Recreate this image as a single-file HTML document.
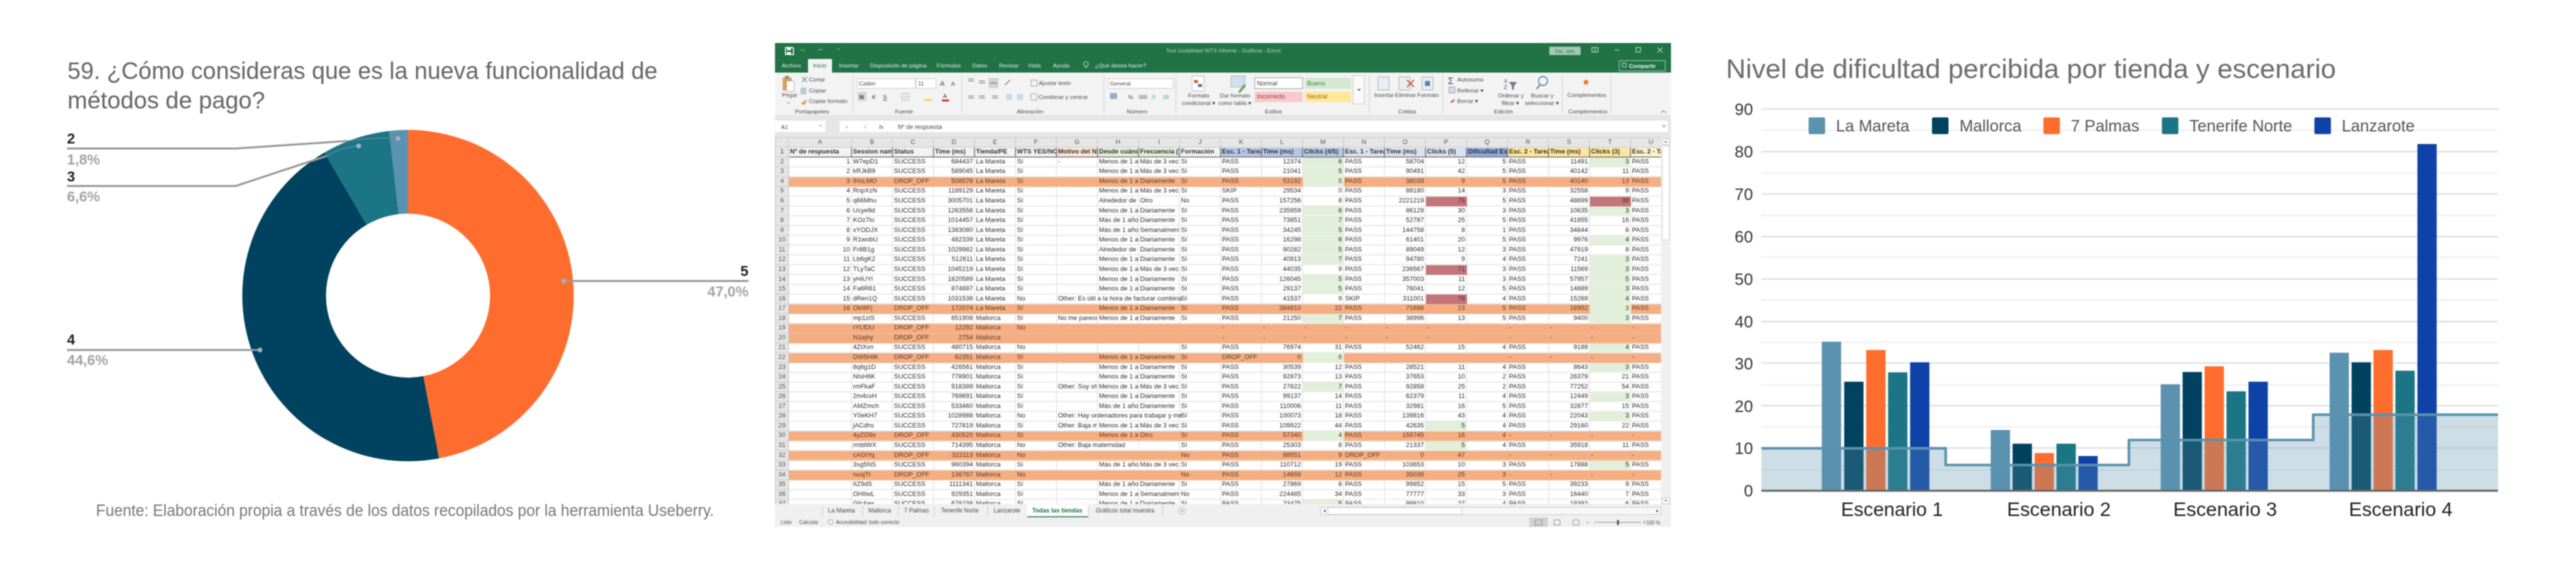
<!DOCTYPE html>
<html lang="es"><head><meta charset="utf-8"><title>Reference</title>
<style>
html,body{margin:0;padding:0;background:#fff;width:2560px;height:575px;overflow:hidden}
body{position:relative;font-family:"Liberation Sans",sans-serif}
svg{position:absolute;left:0;top:0}
svg text{font-family:"Liberation Sans",sans-serif}
.soft{filter:blur(.45px)}
.xl text{font-size:5.8px;fill:#4a4a4a}
#grid{position:absolute;left:775px;top:137.3px;width:885.7px;height:366.9px;overflow:hidden;filter:blur(.42px);background:#fff}
#grid table{border-collapse:collapse;table-layout:fixed;width:896px;transform-origin:0 0;transform:scaleY(.978);font-size:6.5px;color:#2e2e2e;background:#fff}
#grid td{height:10px;line-height:9px;padding:0 1px;white-space:nowrap;overflow:hidden;border:1px solid #e6e6e6;box-sizing:border-box}
#grid td:nth-child(1){background:#e6e6e6;text-align:center;color:#555;border-color:#d0d0d0;padding:0}
#grid td:nth-child(2),#grid td:nth-child(5),#grid td:nth-child(13),#grid td:nth-child(14),#grid td:nth-child(16),#grid td:nth-child(17),#grid td:nth-child(18),#grid td:nth-child(20),#grid td:nth-child(21){text-align:right}
#grid tr.c td{background:#e6e6e6;text-align:center;color:#555;border-color:#d0d0d0;height:8.7px}
#grid tr.h td{font-weight:bold;text-align:left;background:#f2f2f2;border-right:1px solid #777;border-bottom:1px solid #777;color:#333}
#grid tr.h td:nth-child(1){background:#e6e6e6;font-weight:normal;text-align:center;border-color:#d0d0d0}
#grid tr.h .go{background:#fce4d6}#grid tr.h .gg{background:#e2efda}
#grid tr.h .b1{background:#b4c6e7}#grid tr.h .b0{background:#8ea9db}#grid tr.h .b2{background:#d9e1f2}
#grid tr.h .y1{background:#ffe699}#grid tr.h .y2{background:#fff2cc}
#grid tr.o td{background:#f4ae82;border-color:#f4ae82;color:#5a3a26}
#grid tr.o td:nth-child(1){background:#e6e6e6;color:#555;border-color:#d0d0d0}
#grid td.g,#grid tr.o td.g{background:#e2efda;border-color:#e2efda}
#grid td.x{background:#c4757a;border-color:#c4757a;color:#5b2a2a}
#grid td.l{text-align:left!important}
#grid td.v{overflow:visible;border-right-color:transparent}
</style></head><body>
<svg width="2560" height="575" viewBox="0 0 2560 575" xmlns="http://www.w3.org/2000/svg">
<!-- DONUT -->
<g class="soft">
<text x="67.5" y="79" font-size="24.5" fill="#666" textLength="590" lengthAdjust="spacingAndGlyphs">59. ¿Cómo consideras que es la nueva funcionalidad de</text>
<text x="67.5" y="108.5" font-size="24.5" fill="#666" textLength="197.5" lengthAdjust="spacingAndGlyphs">métodos de pago?</text>
<path d="M408 129.9A165.7 165.7 0 0 1 439.05 458.37L423.37 376.15A82 82 0 0 0 408 213.6Z" fill="#ff6d2e"/>
<path d="M439.05 458.37A165.7 165.7 0 0 1 324.55 152.45L366.7 224.76A82 82 0 0 0 423.37 376.15Z" fill="#00425f"/>
<path d="M324.55 152.45A165.7 165.7 0 0 1 389.24 130.96L398.72 214.12A82 82 0 0 0 366.7 224.76Z" fill="#1b7585"/>
<path d="M389.24 130.96A165.7 165.7 0 0 1 408 129.9L408 213.6A82 82 0 0 0 398.72 214.12Z" fill="#5a92b0"/>
<g fill="none" stroke="#9a9a9a" stroke-width="2">
<path d="M67 148.5H235.7L347 141"/><path d="M67 186H235.7L326.5 156"/><path d="M67 350H260"/><path d="M563.8 281H748.5"/>
<path d="M347 141Q375 137 398 138.6M326.5 156Q345 146 358.7 146" stroke="#5a8a9c" stroke-width="1"/>
</g>
<g fill="#9fb4bd"><circle cx="398" cy="138.6" r="2.4"/><circle cx="358.7" cy="146" r="2.4"/><circle cx="260" cy="350" r="2.4"/><circle cx="563.8" cy="281" r="2.4"/></g>
<g font-size="14.5" font-weight="bold" fill="#222">
<text x="67" y="143.7">2</text><text x="67" y="181.5">3</text><text x="67" y="344.7">4</text><text x="748.5" y="275.8" text-anchor="end">5</text></g>
<g font-size="14.5" font-weight="bold" fill="#a3a3a3">
<text x="67" y="164.5">1,8%</text><text x="67" y="201.7">6,6%</text><text x="67" y="365">44,6%</text><text x="748.5" y="296.3" text-anchor="end">47,0%</text></g>
<text x="96" y="516" font-size="16.5" fill="#777" textLength="618" lengthAdjust="spacingAndGlyphs">Fuente: Elaboración propia a través de los datos recopilados por la herramienta Useberry.</text>
</g>

<!-- EXCEL CHROME -->
<g class="xl soft">
<rect x="775" y="43" width="896" height="484" fill="#f0f0f0"/>
<rect x="775" y="43" width="896" height="29.7" fill="#217346"/>
<rect x="775" y="72.7" width="896" height="42.3" fill="#f3f3f3"/>
<rect x="775" y="115" width="896" height="22.3" fill="#e6e6e6"/>
<rect x="775.3" y="120.7" width="50" height="11.3" fill="#fff"/>
<rect x="839.7" y="120.7" width="828" height="11.3" fill="#fff"/>
<rect x="808" y="59" width="24" height="14" fill="#f3f3f3"/>
<!-- title bar -->
<path d="M785.5 47.5h7l1 1v6h-8z" fill="none" stroke="#fff" stroke-width="1"/><rect x="787" y="47.8" width="4" height="2.4" fill="#fff"/><rect x="787" y="52" width="4" height="2.6" fill="#fff"/>
<g fill="none" stroke="#7fb096" stroke-width=".8"><path d="M800 50.5q3-2 5 1"/><path d="M818 51q2-3 5-1"/><path d="M837 49h3"/></g>
<text x="1166" y="52.7" style="fill:#b7d3c2" textLength="114.7" lengthAdjust="spacingAndGlyphs">Test Usabilidad WTS Informe - Gráficos - Excel</text>
<rect x="1549.3" y="46.7" width="31.4" height="8.3" fill="#a5c9b4"/>
<text x="1555" y="53" style="fill:#217346;font-size:5.3px">Inic. ses.</text>
<g fill="none" stroke="#b7d3c2" stroke-width=".8"><rect x="1592" y="47.5" width="6" height="4.5"/><path d="M1595 47.5v4.5"/><path d="M1614.5 50h4.5"/><rect x="1636" y="47.5" width="4.5" height="4.5"/><path d="M1657.5 47.5l5 5m0-5l-5 5"/></g>
<rect x="1619.3" y="60.7" width="46" height="10.3" fill="none" stroke="#a9cbb7" stroke-width=".7"/>
<text x="1629" y="68.2" style="fill:#e8f2ec;font-weight:bold;font-size:5.6px">Compartir</text>
<path d="M1622.5 63h3.5v4h-3.5z" fill="none" stroke="#e8f2ec" stroke-width=".6"/>
<!-- tabs -->
<g>
<text x="781.7" y="67.3" style="fill:#dfece4">Archivo</text>
<text x="839" y="67.3" style="fill:#dfece4">Insertar</text>
<text x="870" y="67.3" style="fill:#dfece4">Disposición de página</text>
<text x="936.7" y="67.3" style="fill:#dfece4">Fórmulas</text>
<text x="972" y="67.3" style="fill:#dfece4">Datos</text>
<text x="999" y="67.3" style="fill:#dfece4">Revisar</text>
<text x="1028" y="67.3" style="fill:#dfece4">Vista</text>
<text x="1053" y="67.3" style="fill:#dfece4">Ayuda</text>
<text x="1095" y="67.3" style="fill:#dfece4">¿Qué desea hacer?</text>
</g>
<text x="813" y="67.3" style="fill:#217346">Inicio</text>
<circle cx="1086" cy="64" r="2.3" fill="none" stroke="#dfece4" stroke-width=".7"/><path d="M1085 67.5h2" stroke="#dfece4" stroke-width=".7"/>
<!-- portapapeles -->
<rect x="782.7" y="77.5" width="9" height="13" fill="#d9a15a"/><rect x="786.5" y="81" width="7.5" height="10.5" fill="#fff" stroke="#999" stroke-width=".5"/><rect x="785" y="76" width="4" height="2.5" fill="#888"/>
<text x="782" y="97">Pegar</text><path d="M787 102l1.5 1.5 1.5-1.5" stroke="#666" stroke-width=".5" fill="none"/>
<path d="M802 77l5 5m0-5l-5 5" stroke="#777" stroke-width=".8"/><rect x="801" y="88" width="5" height="6" fill="#b9cbdc" stroke="#8aa" stroke-width=".4"/>
<path d="M801 104l4-4 2 1-3 4z" fill="#d9a15a"/>
<text x="809" y="81.7">Cortar</text><text x="809" y="92.3">Copiar</text><text x="809" y="103">Copiar formato</text>
<text x="795" y="113.3">Portapapeles</text>
<!-- fuente -->
<rect x="857.3" y="78.7" width="58" height="9.6" fill="#fff" stroke="#c6c6c6" stroke-width=".6"/>
<rect x="916" y="78.7" width="20" height="9.6" fill="#fff" stroke="#c6c6c6" stroke-width=".6"/>
<text x="859" y="85.5">Calibri</text><text x="918" y="85.5">11</text>
<text x="940" y="86" style="font-size:7px">A</text><text x="951" y="86" style="font-size:6px">A</text>
<rect x="857.5" y="92" width="9" height="9" fill="#d2d2d2"/>
<text x="859.5" y="99" style="font-weight:bold;fill:#333">N</text><text x="872" y="99" style="font-style:italic;fill:#333">K</text><text x="883" y="99" style="text-decoration:underline;fill:#333">S</text>
<rect x="902" y="93.5" width="7" height="7" fill="none" stroke="#aaa" stroke-width=".5"/><path d="M905.5 93.5v7M902 97h7" stroke="#aaa" stroke-width=".4"/>
<rect x="924" y="99" width="8" height="2" fill="#ffd34d"/><rect x="942" y="99.5" width="7" height="2" fill="#d03030"/><text x="943" y="98" style="fill:#333">A</text>
<text x="895" y="113.3">Fuente</text>
<!-- alineación -->
<g stroke="#9a9a9a" stroke-width="1"><path d="M968 79h6M968 81h6M979 81h6M979 83h6M968 96h6M968 98h6M979 96h6M979 98h6M992 96h6M992 98h6"/></g>
<rect x="988.5" y="78" width="10" height="10" fill="#d2d2d2"/><path d="M990 83h7" stroke="#888"/>
<path d="M1005 85l5-5" stroke="#888" stroke-width="1"/>
<rect x="1006" y="94" width="6" height="6" fill="#cdd9ea"/><rect x="1017" y="94" width="6" height="6" fill="#cdd9ea"/>
<rect x="1031" y="80" width="6" height="6" fill="none" stroke="#888" stroke-width=".5"/><rect x="1031" y="94" width="6" height="6" fill="none" stroke="#888" stroke-width=".5"/>
<text x="1038.7" y="85">Ajustar texto</text><text x="1038.7" y="99">Combinar y centrar</text>
<text x="1016.7" y="113.3">Alineación</text>
<!-- número -->
<rect x="1108.3" y="78.7" width="65" height="9.6" fill="#fff" stroke="#c6c6c6" stroke-width=".6"/>
<text x="1110" y="85.5">General</text>
<rect x="1110" y="93" width="7" height="6" fill="#8fb0d0"/><text x="1128" y="99" style="fill:#444">%</text><text x="1139" y="99" style="font-size:5px">000</text>
<text x="1151" y="99" style="font-size:5px;fill:#3a7">,0</text><text x="1162" y="99" style="font-size:5px;fill:#3a7">,00</text>
<text x="1126.7" y="113.3">Número</text>
<!-- estilos -->
<rect x="1192" y="76" width="12" height="15" fill="#fff" stroke="#aaa" stroke-width=".5"/><rect x="1194" y="80" width="4" height="3" fill="#d0603a"/><rect x="1198" y="84" width="4" height="3" fill="#4a78b0"/>
<rect x="1231" y="76" width="14" height="11" fill="#cfe0ee" stroke="#aaa" stroke-width=".5"/><path d="M1238 92l6-8 2 2-6 7z" fill="#7aa05a"/>
<text x="1188" y="97.3">Formato</text><text x="1181.7" y="105">condicional ▾</text>
<text x="1219.7" y="97.3">Dar formato</text><text x="1218.3" y="105">como tabla ▾</text>
<rect x="1254.7" y="77.7" width="48" height="11" fill="#fff" stroke="#aaa" stroke-width=".8"/>
<rect x="1305" y="77.7" width="46" height="11" fill="#d5e8d4"/>
<rect x="1254.7" y="91.7" width="48" height="10.5" fill="#f6c9cd"/>
<rect x="1305" y="91.7" width="46" height="10.5" fill="#ffe898"/>
<text x="1257" y="85.5" style="font-size:6.3px;fill:#444">Normal</text>
<text x="1307" y="85.5" style="font-size:6.3px;fill:#3d8a3d">Bueno</text>
<text x="1257" y="98.7" style="font-size:6.3px;fill:#a8302a">Incorrecto</text>
<text x="1307" y="98.7" style="font-size:6.3px;fill:#a36b10">Neutral</text>
<rect x="1353" y="75.7" width="11.3" height="28.3" fill="#fafafa" stroke="#c6c6c6" stroke-width=".6"/><path d="M1357 89h4l-2 2z" fill="#666"/>
<text x="1265" y="113.3">Estilos</text>
<!-- celdas -->
<g fill="#e8eef5" stroke="#999" stroke-width=".5"><rect x="1378" y="77" width="11" height="13"/><rect x="1399" y="77" width="11" height="13"/><rect x="1422" y="77" width="11" height="13"/></g>
<path d="M1407 80l7 7m0-7l-7 7" stroke="#c0392b" stroke-width="1"/><rect x="1425" y="81" width="5" height="5" fill="#5a7fb0"/>
<text x="1374.3" y="97">Insertar</text><text x="1395" y="97">Eliminar</text><text x="1417.3" y="97">Formato</text><text x="1398.3" y="113.3">Celdas</text>
<!-- edición -->
<text x="1448" y="84" style="font-size:9px;fill:#444">Σ</text>
<rect x="1449" y="87" width="6" height="6" fill="#cfe0ee" stroke="#777" stroke-width=".4"/>
<path d="M1450 102l4-3 1 1-3 3z" fill="#d06a5a"/>
<text x="1457.3" y="81.7">Autosuma</text><text x="1457.3" y="92.3">Rellenar ▾</text><text x="1457.3" y="103">Borrar ▾</text>
<text x="1504" y="83" style="font-size:5px;fill:#4a78b0">A</text><text x="1504" y="89" style="font-size:5px;fill:#333">Z</text><path d="M1509 82h8l-3 4v4l-2-1v-3z" fill="#777"/>
<circle cx="1543" cy="81" r="4.5" fill="none" stroke="#3a6ea5" stroke-width=".9"/><path d="M1540 85l-3.5 4" stroke="#3a6ea5" stroke-width="1.2"/>
<text x="1498" y="97.3">Ordenar y</text><text x="1501.7" y="105">filtrar ▾</text><text x="1531" y="97.3">Buscar y</text><text x="1525" y="105">seleccionar ▾</text>
<text x="1494" y="113.3">Edición</text>
<circle cx="1586" cy="82.3" r="2.4" fill="#f47b30"/>
<text x="1567.3" y="97">Complementos</text><text x="1568.3" y="113.3">Complementos</text>
<path d="M1661 113l2.5-2.5 2.5 2.5" fill="none" stroke="#777" stroke-width=".6"/>
<g stroke="#cfcfcf" stroke-width=".7"><path d="M853 75v38M961.7 75v38M1104 75v38M1176 75v38M1369.3 75v38M1442.7 75v38M1562.3 75v38M1610.7 75v38"/></g>
<!-- formula bar -->
<text x="781" y="129">A1</text><path d="M819 125l1.5 1.5 1.5-1.5" stroke="#666" stroke-width=".5" fill="none"/>
<text x="845" y="129" style="fill:#aaa">×</text><text x="863" y="129" style="fill:#aaa">✓</text><text x="879" y="129" style="font-style:italic">fx</text>
<text x="897.7" y="129" style="font-size:6.2px">Nº de respuesta</text>
<path d="M1662 125l2 2 2-2" stroke="#777" stroke-width=".6" fill="none"/>
<!-- scrollbar -->
<rect x="1661" y="137.3" width="10" height="367" fill="#f0f0f0"/>
<rect x="1662.3" y="138.7" width="7" height="6" fill="#fff" stroke="#aaa" stroke-width=".5"/>
<rect x="1662.3" y="146" width="7" height="94" fill="#fff" stroke="#c6c6c6" stroke-width=".5"/>
<rect x="1662.3" y="498" width="7" height="6" fill="#fff" stroke="#aaa" stroke-width=".5"/>
<path d="M1664.5 142.5l1.3-1.5 1.3 1.5zM1664.5 500l1.3 1.5 1.3-1.5z" fill="#333"/>
<!-- sheet tabs -->
<rect x="775" y="504.3" width="896" height="13" fill="#f0f0f0"/>
<rect x="1027" y="504.3" width="61.3" height="13" fill="#fff"/><path d="M1027 516.8h61.3" stroke="#217346" stroke-width="1"/>
<g stroke="#c6c6c6" stroke-width=".6"><path d="M822.3 506v10M862.7 506v10M898.3 506v10M934.3 506v10M987.7 506v10M1088.3 506v10M1162.7 506v10"/></g>
<g>
<text x="828" y="512.5" style="font-size:6px">La Mareta</text><text x="868.3" y="512.5" style="font-size:6px">Mallorca</text><text x="904" y="512.5" style="font-size:6px">7 Palmas</text><text x="941" y="512.5" style="font-size:6px">Tenerife Norte</text><text x="993.7" y="512.5" style="font-size:6px">Lanzarote</text>
<text x="1032.3" y="512.5" style="font-size:6px;font-weight:bold;fill:#217346">Todas las tiendas</text>
<text x="1095.7" y="512.5" style="font-size:6px">Gráficos total muestra</text></g>
<circle cx="1182" cy="511" r="3.5" fill="none" stroke="#aaa" stroke-width=".5"/><path d="M1180 511h4M1182 509v4" stroke="#999" stroke-width=".5"/>
<rect x="1320.7" y="507.3" width="340" height="7.4" fill="#f7f7f7" stroke="#bbb" stroke-width=".5"/>
<rect x="1328" y="507.5" width="133.7" height="7" fill="#fff" stroke="#bbb" stroke-width=".5"/>
<path d="M1325.5 509.5v3l-1.7-1.5zM1656.5 509.5v3l1.7-1.5z" fill="#333"/>
<!-- status -->
<text x="780.7" y="524" style="font-size:5.2px">Listo</text><text x="799.3" y="524" style="font-size:5.2px">Calcular</text>
<circle cx="830.7" cy="522" r="2.5" fill="none" stroke="#888" stroke-width=".5"/>
<text x="836" y="524" style="font-size:5.2px">Accesibilidad: todo correcto</text>
<rect x="1529.3" y="517.5" width="18.4" height="9.5" fill="#d2d2d2"/>
<g fill="none" stroke="#888" stroke-width=".6"><rect x="1535" y="520" width="7" height="5"/><rect x="1554" y="520" width="6" height="5"/><rect x="1573" y="520" width="6" height="5"/></g>
<path d="M1586 522.3h3M1594.3 522.3h46.4M1643 522.3h3M1644.5 520.8v3" stroke="#888" stroke-width=".6"/><rect x="1617" y="520" width="2" height="5" fill="#555"/>
<text x="1653.3" y="524.5" style="font-size:5px" text-anchor="middle">100 %</text>
</g>

<!-- RIGHT CHART -->
<g class="soft">
<text x="1726" y="78" font-size="26.5" fill="#6b6b6b" textLength="610" lengthAdjust="spacingAndGlyphs">Nivel de dificultad percibida por tienda y escenario</text>
<g stroke="#e0e0e0" stroke-width="1.6">
<path d="M1761.4 109H2498M1761.4 151.7H2498M1761.4 194H2498M1761.4 236.7H2498M1761.4 279H2498M1761.4 321.7H2498M1761.4 363H2498M1761.4 405.7H2498M1761.4 448H2498"/>
</g>
<g stroke="#f1eff0" stroke-width="1.5">
<path d="M1761.4 130.3H2498M1761.4 173H2498M1761.4 215.5H2498M1761.4 257H2498M1761.4 300H2498M1761.4 342.5H2498M1761.4 385H2498M1761.4 427H2498M1761.4 470H2498"/>
</g>
<g font-size="16.5" fill="#333" text-anchor="end">
<text x="1753" y="115">90</text><text x="1753" y="157.5">80</text><text x="1753" y="200">70</text><text x="1753" y="242.5">60</text><text x="1753" y="285">50</text><text x="1753" y="327.5">40</text><text x="1753" y="369.5">30</text><text x="1753" y="412">20</text><text x="1753" y="454">10</text><text x="1753" y="496.5">0</text>
</g>
<g>
<rect x="1808.6" y="117.4" width="16.5" height="16.7" rx="1.5" fill="#5a92b0"/>
<rect x="1932" y="117.4" width="16.5" height="16.7" rx="1.5" fill="#00425f"/>
<rect x="2043.4" y="117.4" width="16.5" height="16.7" rx="1.5" fill="#ff6d2e"/>
<rect x="2161.9" y="117.4" width="16.5" height="16.7" rx="1.5" fill="#1b7585"/>
<rect x="2314.4" y="117.4" width="16.5" height="16.7" rx="1.5" fill="#0f42a6"/>
</g>
<g font-size="17" fill="#555">
<text x="1836" y="131.5" textLength="73.5" lengthAdjust="spacingAndGlyphs">La Mareta</text>
<text x="1959.5" y="131.5" textLength="62" lengthAdjust="spacingAndGlyphs">Mallorca</text>
<text x="2070.8" y="131.5" textLength="68.6" lengthAdjust="spacingAndGlyphs">7 Palmas</text>
<text x="2189.3" y="131.5" textLength="103" lengthAdjust="spacingAndGlyphs">Tenerife Norte</text>
<text x="2341.8" y="131.5" textLength="73" lengthAdjust="spacingAndGlyphs">Lanzarote</text>
</g>
<g fill="#5a92b0">
<rect x="1821.8" y="341.7" width="19.3" height="149"/><rect x="1990.7" y="430" width="19.3" height="60.7"/><rect x="2160.7" y="384.3" width="19.3" height="106.4"/><rect x="2329.6" y="352.7" width="19.3" height="138"/>
</g>
<g fill="#00425f">
<rect x="1844.2" y="381.7" width="19.3" height="109"/><rect x="2012.6" y="443.7" width="19.3" height="47"/><rect x="2182.6" y="372" width="19.3" height="118.7"/><rect x="2351.6" y="362.3" width="19.3" height="128.4"/>
</g>
<g fill="#ff6d2e">
<rect x="1866.2" y="350" width="19.3" height="140.7"/><rect x="2034.6" y="453" width="19.3" height="37.7"/><rect x="2204.6" y="366.3" width="19.3" height="124.4"/><rect x="2373.5" y="350" width="19.3" height="140.7"/>
</g>
<g fill="#1b7585">
<rect x="1888.1" y="372.3" width="19.3" height="118.4"/><rect x="2056.5" y="443.7" width="19.3" height="47"/><rect x="2226.5" y="391.3" width="19.3" height="99.4"/><rect x="2395.4" y="370.7" width="19.3" height="120"/>
</g>
<g fill="#0f42a6">
<rect x="1910.1" y="362.3" width="19.3" height="128.4"/><rect x="2078.4" y="456" width="19.3" height="34.7"/><rect x="2248.5" y="381.7" width="19.3" height="109"/><rect x="2417.4" y="144" width="19.3" height="346.7"/>
</g>
<path d="M1761.4 448.3H1945.7V465H2128.9V440H2313.2V414.7H2498V490.7H1761.4Z" fill="#5a92b0" fill-opacity=".3"/>
<path d="M1761.4 448.3H1945.7V465H2128.9V440H2313.2V414.7H2498" fill="none" stroke="#5a92b0" stroke-width="2.6" stroke-linejoin="round"/>
<path d="M1761.4 490.7H2498" stroke="#666" stroke-width="2"/>
<g font-size="19" fill="#222">
<text x="1841" y="516" textLength="102" lengthAdjust="spacingAndGlyphs">Escenario 1</text>
<text x="2007" y="516" textLength="103.8" lengthAdjust="spacingAndGlyphs">Escenario 2</text>
<text x="2173.3" y="516" textLength="103.7" lengthAdjust="spacingAndGlyphs">Escenario 3</text>
<text x="2348.9" y="516" textLength="103.6" lengthAdjust="spacingAndGlyphs">Escenario 4</text>
</g>
</g>
</svg>

<div id="grid"><table>
<colgroup><col style="width:13px"><col style="width:63px"><col span="20" style="width:41px"></colgroup>
<tr class="c"><td><td>A<td>B<td>C<td>D<td>E<td>F<td>G<td>H<td>I<td>J<td>K<td>L<td>M<td>N<td>O<td>P<td>Q<td>R<td>S<td>T<td>U</tr>
<tr class="h"><td>1<td>Nº de respuesta<td>Session name<td>Status<td>Time (ms)<td>Tienda/PE<td>WTS YES/NO<td class="go">Motivo del NO<td class="gg">Desde cuándo<td class="gg">Frecuencia (Y)<td>Formación<td class="b1">Esc. 1 - Tarea 1<td class="b1">Time (ms)<td class="b1">Clicks (4/5)<td class="b2">Esc. 1 - Tarea 2<td class="b2">Time (ms)<td class="b2">Clicks (5)<td class="b0">Dificultad Esc.<td class="y1">Esc. 2 - Tarea 1<td class="y1">Time (ms)<td class="y1">Clicks (3)<td class="y2">Esc. 2 - Tar</tr>
<tr><td>2<td>1<td>W7epD1<td>SUCCESS<td>684437<td>La Mareta<td>Sí<td>-<td>Menos de 1 año<td>Más de 3 veces<td>Sí<td>PASS<td>12374<td class="g">6<td>PASS<td>58704<td>12<td>5<td>PASS<td>11491<td class="g">3<td>PASS</tr>
<tr><td>3<td>2<td>kRJkB9<td>SUCCESS<td>589045<td>La Mareta<td>Sí<td><td>Menos de 1 año<td>Más de 3 veces<td>Sí<td>PASS<td>21041<td class="g">5<td>PASS<td>90491<td>42<td>5<td>PASS<td>40142<td>11<td>PASS</tr>
<tr class="o"><td>4<td>3<td>IHsLMO<td>DROP_OFF<td>508576<td>La Mareta<td>Sí<td><td>Menos de 1 año<td>Diariamente<td>Sí<td>PASS<td>53192<td class="g">5<td>PASS<td>38039<td>9<td>5<td>PASS<td>40140<td>13<td>PASS</tr>
<tr><td>5<td>4<td>RnpXzN<td>SUCCESS<td>1189129<td>La Mareta<td>Sí<td><td>Menos de 1 año<td>Más de 3 veces<td>Sí<td>SKIP<td>29534<td>0<td>PASS<td>88180<td>14<td>3<td>PASS<td>32558<td>9<td>PASS</tr>
<tr><td>6<td>5<td>q66Mhu<td>SUCCESS<td>3005701<td>La Mareta<td>Sí<td><td>Alrededor de<td>Otro<td>No<td>PASS<td>157256<td>8<td>PASS<td>2221219<td class="x">75<td>5<td>PASS<td>48699<td class="x">38<td>PASS</tr>
<tr><td>7<td>6<td>Ucye9d<td>SUCCESS<td>1263556<td>La Mareta<td>Sí<td><td>Menos de 1 año<td>Diariamente<td>Sí<td>PASS<td>235959<td class="g">6<td>PASS<td>86129<td>30<td>3<td>PASS<td>10635<td class="g">3<td>PASS</tr>
<tr><td>8<td>7<td>KOz7lo<td>SUCCESS<td>1014457<td>La Mareta<td>Sí<td><td>Más de 1 año<td>Diariamente<td>Sí<td>PASS<td>73851<td class="g">7<td>PASS<td>52787<td>25<td>5<td>PASS<td>41855<td>16<td>PASS</tr>
<tr><td>9<td>8<td>xYODJX<td>SUCCESS<td>1383080<td>La Mareta<td>Sí<td><td>Más de 1 año<td>Semanalment<td>Sí<td>PASS<td>34245<td class="g">5<td>PASS<td>144758<td>8<td>1<td>PASS<td>34844<td>8<td>PASS</tr>
<tr><td>10<td>9<td>R1wobU<td>SUCCESS<td>482339<td>La Mareta<td>Sí<td><td>Menos de 1 año<td>Diariamente<td>Sí<td>PASS<td>16298<td class="g">6<td>PASS<td>61401<td>20<td>5<td>PASS<td>9976<td class="g">4<td>PASS</tr>
<tr><td>11<td>10<td>Fr8B1g<td>SUCCESS<td>1029982<td>La Mareta<td>Sí<td><td>Alrededor de<td>Diariamente<td>Sí<td>PASS<td>90282<td class="g">5<td>PASS<td>89049<td>12<td>3<td>PASS<td>47919<td>8<td>PASS</tr>
<tr><td>12<td>11<td>Lb6gK2<td>SUCCESS<td>512611<td>La Mareta<td>Sí<td><td>Menos de 1 año<td>Diariamente<td>Sí<td>PASS<td>40913<td class="g">7<td>PASS<td>94780<td>9<td>4<td>PASS<td>7241<td class="g">3<td>PASS</tr>
<tr><td>13<td>12<td>TLyTaC<td>SUCCESS<td>1045219<td>La Mareta<td>Sí<td><td>Menos de 1 año<td>Más de 3 veces<td>Sí<td>PASS<td>44035<td>9<td>PASS<td>236567<td class="x">71<td>3<td>PASS<td>11569<td class="g">3<td>PASS</tr>
<tr><td>14<td>13<td>yHiUYl<td>SUCCESS<td>1820589<td>La Mareta<td>Sí<td><td>Menos de 1 año<td>Diariamente<td>Sí<td>PASS<td>126045<td class="g">5<td>PASS<td>357003<td>11<td>3<td>PASS<td>57957<td class="g">5<td>PASS</tr>
<tr><td>15<td>14<td>Fa6R61<td>SUCCESS<td>874887<td>La Mareta<td>Sí<td><td>Menos de 1 año<td>Diariamente<td>Sí<td>PASS<td>29137<td class="g">5<td>PASS<td>76041<td>12<td>5<td>PASS<td>14889<td class="g">3<td>PASS</tr>
<tr><td>16<td>15<td>dRen1Q<td>SUCCESS<td>1031538<td>La Mareta<td>No<td class="v">Other: Es útil a la hora de facturar combina<td class="v"><td><td>Sí<td>PASS<td>41537<td>9<td>SKIP<td>311001<td class="x">78<td>4<td>PASS<td>15269<td class="g">4<td>PASS</tr>
<tr class="o"><td>17<td>16<td>OkI8Fj<td>DROP_OFF<td>172074<td>La Mareta<td>Sí<td><td>Menos de 1 año<td>Diariamente<td>Sí<td>PASS<td>384810<td>22<td>PASS<td>71698<td>23<td>5<td>PASS<td>18952<td class="g">3<td>PASS</tr>
<tr><td>18<td><td>mp1ziS<td>SUCCESS<td>651908<td>Mallorca<td>Sí<td>No me parece<td>Menos de 1 año<td>Diariamente<td>Sí<td>PASS<td>21250<td class="g">7<td>PASS<td>38996<td>13<td>5<td>PASS<td>9400<td class="g">3<td>PASS</tr>
<tr class="o"><td>19<td><td>rYLfDU<td>DROP_OFF<td>12292<td>Mallorca<td>No<td><td><td><td><td>-<td class="l">-<td class="l">-<td>-<td class="l">-<td class="l">-<td><td>-<td class="l">-<td class="l">-<td>-</tr>
<tr class="o"><td>20<td><td>N1ejhy<td>DROP_OFF<td>2754<td>Mallorca<td><td><td><td><td><td>-<td class="l">-<td class="l">-<td>-<td class="l">-<td class="l">-<td><td>-<td class="l">-<td class="l">-<td>-</tr>
<tr><td>21<td><td>4ZtXvn<td>SUCCESS<td>480715<td>Mallorca<td>No<td><td><td><td>Sí<td>PASS<td>76974<td>31<td>PASS<td>52462<td>15<td>4<td>PASS<td>9188<td class="g">4<td>PASS</tr>
<tr class="o"><td>22<td><td>DW5HIK<td>DROP_OFF<td>62351<td>Mallorca<td>Sí<td><td>Menos de 1 año<td>Diariamente<td>Sí<td>DROP_OFF<td>0<td class="g">6<td><td><td><td><td>-<td class="l">-<td class="l">-<td>-</tr>
<tr><td>23<td><td>8q6g1D<td>SUCCESS<td>426561<td>Mallorca<td>Sí<td><td>Menos de 1 año<td>Diariamente<td>Sí<td>PASS<td>30539<td>12<td>PASS<td>28521<td>11<td>4<td>PASS<td>8643<td class="g">3<td>PASS</tr>
<tr><td>24<td><td>NIsH6K<td>SUCCESS<td>778901<td>Mallorca<td>Sí<td><td>Menos de 1 año<td>Diariamente<td>Sí<td>PASS<td>92873<td>13<td>PASS<td>37653<td>10<td>2<td>PASS<td>26379<td>21<td>PASS</tr>
<tr><td>25<td><td>rmFkaF<td>SUCCESS<td>918389<td>Mallorca<td>Sí<td>Other: Soy sh<td>Menos de 1 año<td>Más de 3 veces<td>Sí<td>PASS<td>27822<td class="g">7<td>PASS<td>92858<td>25<td>2<td>PASS<td>77252<td>54<td>PASS</tr>
<tr><td>26<td><td>2m4cvH<td>SUCCESS<td>769691<td>Mallorca<td>Sí<td><td>Menos de 1 año<td>Diariamente<td>Sí<td>PASS<td>99137<td>14<td>PASS<td>62379<td>11<td>4<td>PASS<td>12449<td class="g">3<td>PASS</tr>
<tr><td>27<td><td>AMZmch<td>SUCCESS<td>533460<td>Mallorca<td>Sí<td><td>Más de 1 año<td>Diariamente<td>Sí<td>PASS<td>110006<td>11<td>PASS<td>32981<td>16<td>5<td>PASS<td>32877<td>15<td>PASS</tr>
<tr><td>28<td><td>Y0eKH7<td>SUCCESS<td>1028988<td>Mallorca<td>No<td class="v">Other: Hay ordenadores para trabajar y me<td class="v"><td><td>Sí<td>PASS<td>100073<td>18<td>PASS<td>139816<td>43<td>4<td>PASS<td>22043<td class="g">3<td>PASS</tr>
<tr><td>29<td><td>jACdhs<td>SUCCESS<td>727819<td>Mallorca<td>Sí<td>Other: Baja m<td>Menos de 1 año<td>Más de 3 veces<td>Sí<td>PASS<td>109922<td>44<td>PASS<td>42635<td class="g">5<td>4<td>PASS<td>29160<td>22<td>PASS</tr>
<tr class="o"><td>30<td><td>4yZO9x<td>DROP_OFF<td>430520<td>Mallorca<td>Sí<td><td>Menos de 1 año<td>Otro<td>Sí<td>PASS<td>57340<td class="g">4<td>PASS<td>155745<td>16<td>4<td>-<td class="l">-<td class="l">-<td>-</tr>
<tr><td>31<td><td>rmbtWX<td>SUCCESS<td>714395<td>Mallorca<td>No<td class="v">Other: Baja maternidad<td><td><td>Sí<td>PASS<td>25303<td>8<td>PASS<td>21337<td class="g">5<td>4<td>PASS<td>35918<td>11<td>PASS</tr>
<tr class="o"><td>32<td><td>cAGlYq<td>DROP_OFF<td>322113<td>Mallorca<td>No<td><td><td><td>No<td>PASS<td>88551<td>9<td>DROP_OFF<td>0<td>47<td><td>-<td class="l">-<td class="l">-<td>-</tr>
<tr><td>33<td><td>3sg5NS<td>SUCCESS<td>960394<td>Mallorca<td>Sí<td><td>Más de 1 año<td>Más de 3 veces<td>Sí<td>PASS<td>110712<td>19<td>PASS<td>103653<td>10<td>3<td>PASS<td>17888<td class="g">5<td>PASS</tr>
<tr class="o"><td>34<td><td>nusjTt<td>DROP_OFF<td>136767<td>Mallorca<td>No<td><td><td><td>No<td>PASS<td>14659<td>12<td>PASS<td>35036<td>25<td>3<td>-<td class="l">-<td class="l">-<td>-</tr>
<tr><td>35<td><td>IIZ9dS<td>SUCCESS<td>1111341<td>Mallorca<td>Sí<td><td>Más de 1 año<td>Diariamente<td>Sí<td>PASS<td>27869<td>8<td>PASS<td>99852<td>15<td>5<td>PASS<td>39233<td>9<td>PASS</tr>
<tr><td>36<td><td>OHItwL<td>SUCCESS<td>929351<td>Mallorca<td>Sí<td><td>Menos de 1 año<td>Semanalment<td>No<td>PASS<td>224485<td>34<td>PASS<td>77777<td>33<td>3<td>PASS<td>16440<td>7<td>PASS</tr>
<tr><td>37<td><td>Gfc&amp;ex<td>SUCCESS<td>678238<td>Mallorca<td>Sí<td><td>Menos de 1 año<td>Diariamente<td>Sí<td>PASS<td>23475<td class="g">5<td>PASS<td>99810<td>27<td>4<td>PASS<td>19392<td>6<td>PASS</tr>
</table></div>
</body></html>
